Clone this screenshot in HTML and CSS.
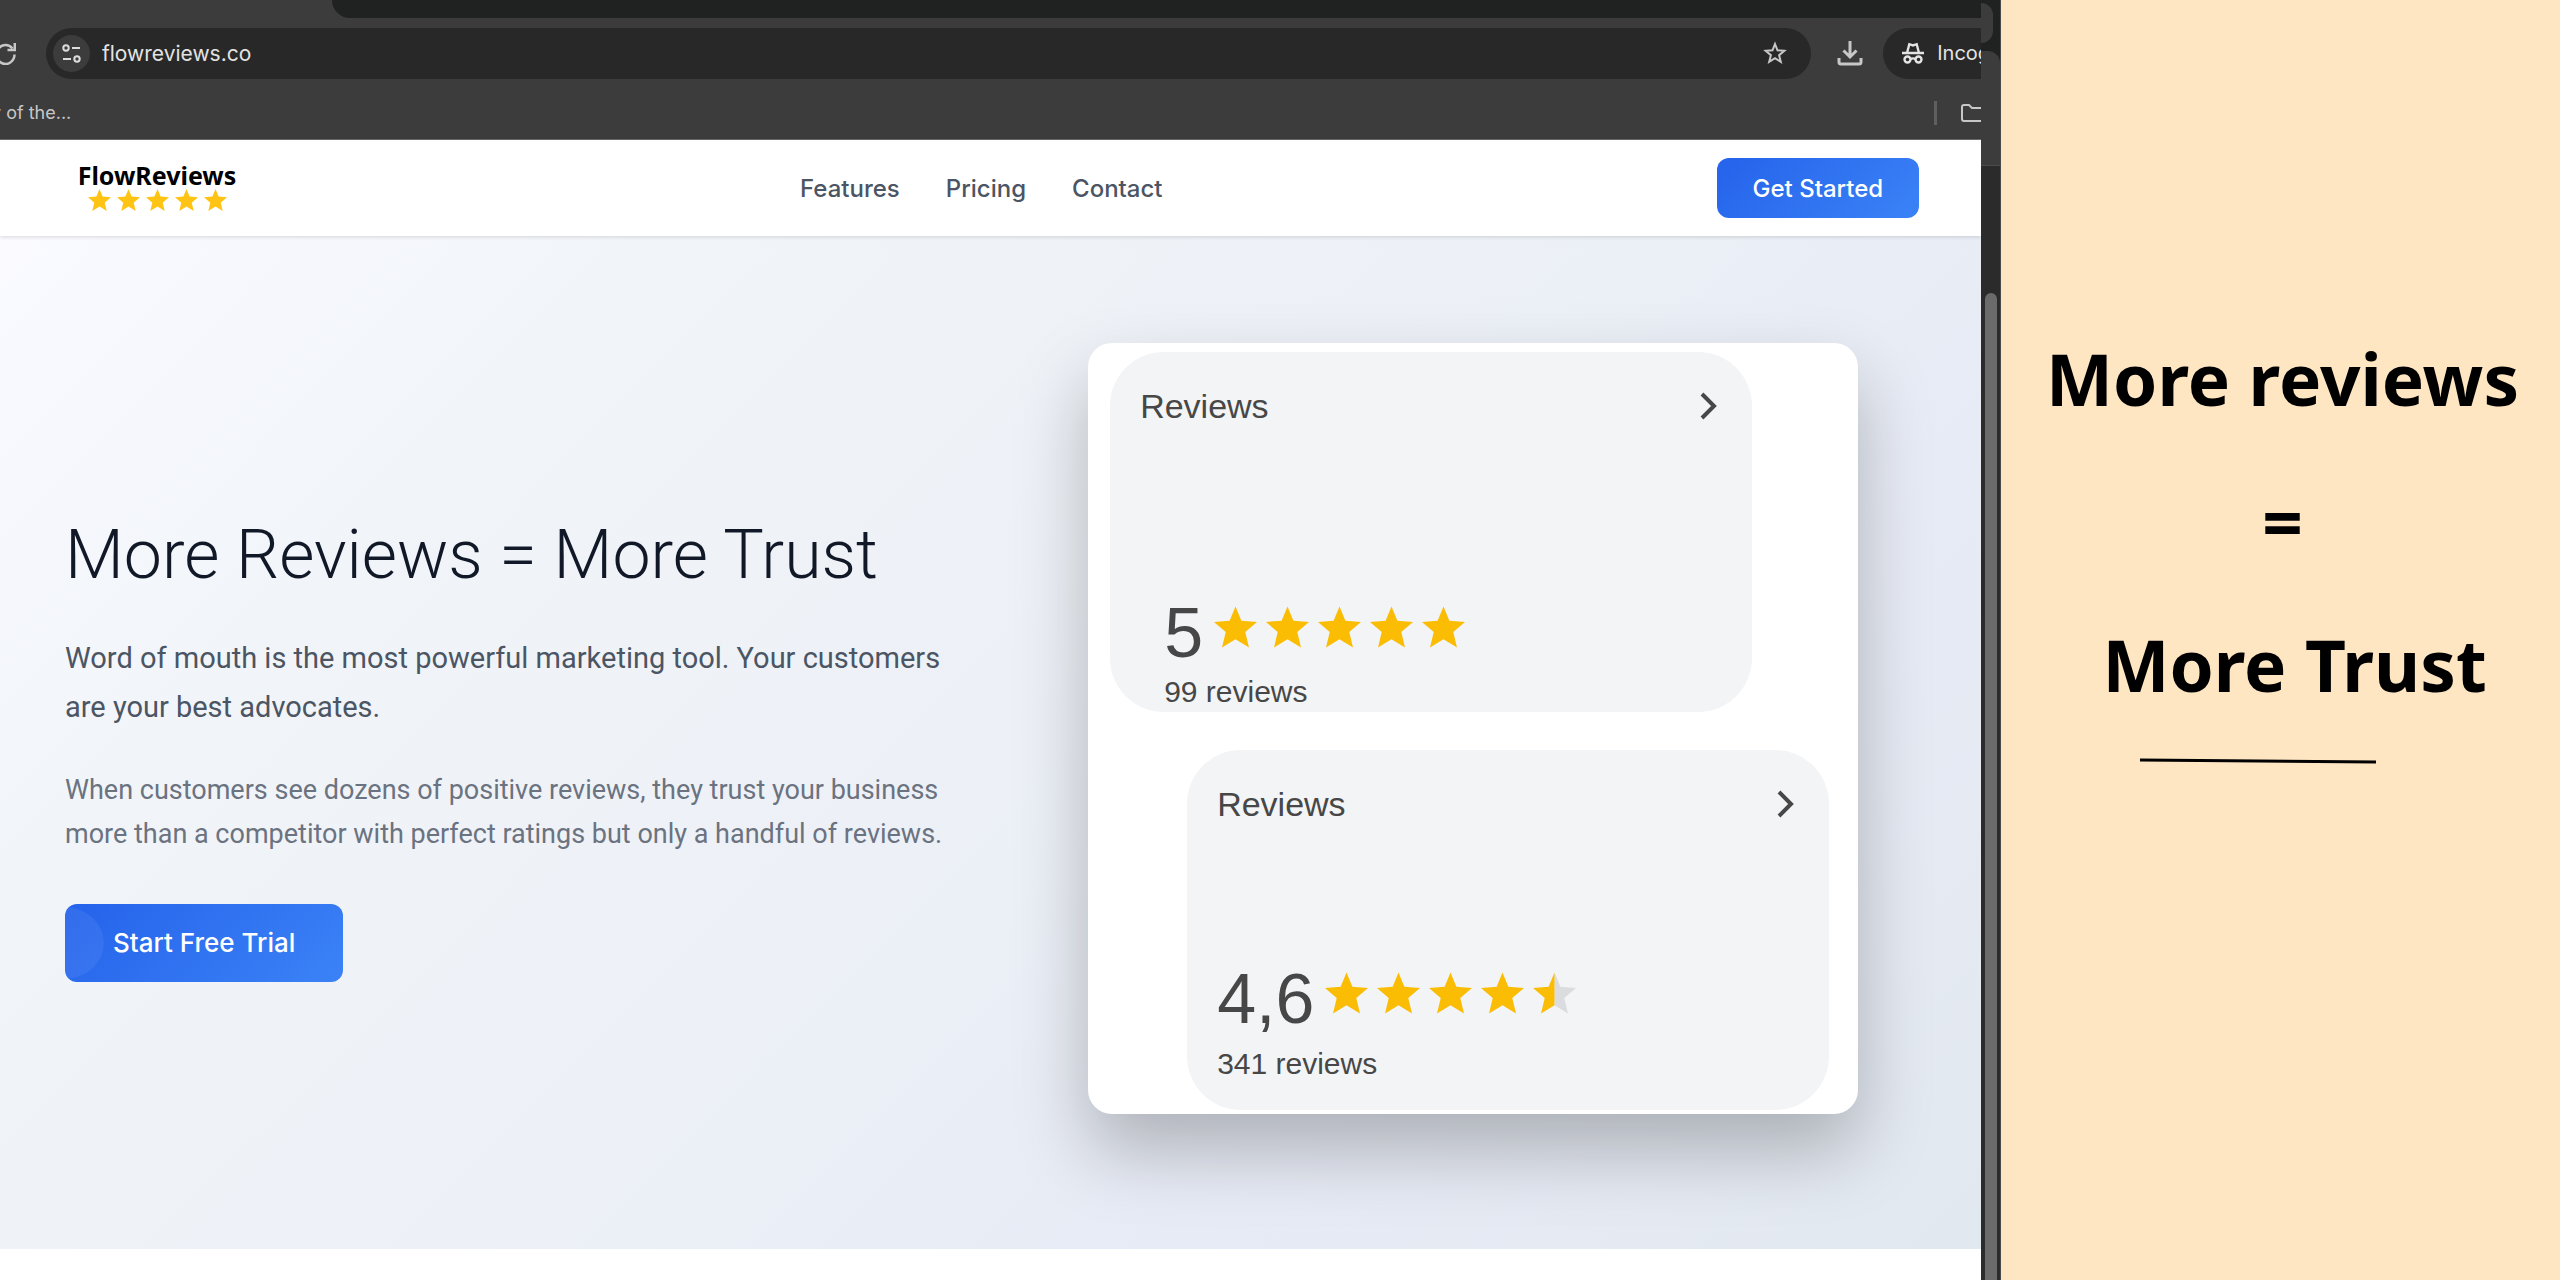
FILE: index.html
```html
<!DOCTYPE html>
<html lang="en">

<head>
	<meta charset="utf-8">
	<title>FlowReviews</title>
	<link rel="stylesheet" href="styles.css">
</head>

<body>
	<!-- shared star shape -->
	<svg class="defs" aria-hidden="true">
		<symbol id="star" viewBox="0 0 44 42">
			<path d="M22 0 L28 14.5 L44 15.8 L32 26.2 L35.8 42 L22 33.5 L8.2 42 L12 26.2 L0 15.8 L16 14.5 Z" />
		</symbol>
	</svg>

	<div class="split-container">

		<div class="browser">
			<div class="tab-strip">
				<div class="tab-rest"></div>
			</div>

			<div class="toolbar">
				<button class="icon-btn reload" aria-label="Reload">
					<svg width="16" height="24" viewBox="8 0 16 24" fill="none" stroke="#c7c7c7" stroke-width="2.5">
						<path d="M20.5 7.5 A9 9.5 0 1 0 22.5 13.5" />
						<path d="M22.8 2 V9 H15.5" />
					</svg>
				</button>
				<div class="omnibox">
					<button class="site-info" aria-label="Site information">
						<svg width="19" height="19" viewBox="0 0 19 19" fill="none" stroke="#dcdcdc" stroke-width="2">
							<circle cx="4" cy="4" r="2.7" />
							<path d="M10 4 H18 M1 15 H9" />
							<circle cx="15" cy="15" r="2.7" />
						</svg>
					</button>
					<input type="text" id="address" aria-label="Address" value="flowreviews.co">
					<button class="icon-btn" aria-label="Bookmark this tab">
						<svg width="24" height="24" viewBox="0 0 24 24" fill="none" stroke="#c7c7c7" stroke-width="2">
							<path d="M12 3 L14.5 9.3 L21.3 9.8 L16.1 14.2 L17.8 20.9 L12 17.2 L6.2 20.9 L7.9 14.2 L2.7 9.8 L9.5 9.3 Z" />
						</svg>
					</button>
				</div>
				<button class="icon-btn download" aria-label="Downloads">
					<svg width="26" height="26" viewBox="0 0 26 26" fill="none" stroke="#c7c7c7" stroke-width="3">
						<path d="M13 1 V16 M6.5 10.5 L13 17 L19.5 10.5" />
						<path d="M2 18 V22 Q2 24 4 24 H22 Q24 24 24 22 V18" />
					</svg>
				</button>
				<div class="incognito">
					<svg width="24" height="22" viewBox="0 0 24 22" fill="none" stroke="#e3e3e3" stroke-width="2.4">
						<path d="M1 11 H23" />
						<path d="M6 11 L8.3 2.2 L12 3.4 L15.7 2.2 L18 11" />
						<circle cx="6.5" cy="17.5" r="3" />
						<circle cx="17.5" cy="17.5" r="3" />
						<path d="M9.5 17 Q12 15.8 14.5 17" />
					</svg>
					<span>Incognito</span>
				</div>
			</div>

			<div class="bookmarks">
				<a href="#">y of the...</a>
				<div class="all-bookmarks">
					<span class="divider"></span>
					<svg width="20" height="20" viewBox="0 0 20 20" fill="none" stroke="#c7c7c7" stroke-width="2">
						<path d="M24 5 H11 L8 2 H3 Q1 2 1 4 V16 Q1 18 3 18 H24" />
					</svg>
				</div>
			</div>

			<header class="site-header">
				<a href="#" class="logo">
					<span>FlowReviews</span>
					<span class="logo-stars">
						<svg><use href="#star" /></svg>
						<svg><use href="#star" /></svg>
						<svg><use href="#star" /></svg>
						<svg><use href="#star" /></svg>
						<svg><use href="#star" /></svg>
					</span>
				</a>
				<nav>
					<a href="#">Features</a>
					<a href="#">Pricing</a>
					<a href="#">Contact</a>
				</nav>
				<button class="btn">Get Started</button>
			</header>

			<main class="hero">
				<div class="hero-text">
					<h1>More Reviews = More Trust</h1>
					<p class="lead">Word of mouth is the most powerful marketing tool. Your customers<br>are your best advocates.</p>
					<p class="sub">When customers see dozens of positive reviews, they trust your business<br>more than a competitor with perfect ratings but only a handful of reviews.</p>
					<button class="btn btn-large">Start Free Trial</button>
				</div>

				<div class="review-card">
					<section class="review first">
						<div class="review-head">
							<h2>Reviews</h2>
							<svg width="18" height="28" viewBox="0 0 18 28" fill="none" stroke="#474747" stroke-width="4">
								<path d="M2 2 L14 14 L2 26" />
							</svg>
						</div>
						<div class="rating">
							<b>5</b>
							<div class="stars">
								<svg><use href="#star" /></svg>
								<svg><use href="#star" /></svg>
								<svg><use href="#star" /></svg>
								<svg><use href="#star" /></svg>
								<svg><use href="#star" /></svg>
							</div>
						</div>
						<p>99 reviews</p>
					</section>

					<section class="review second">
						<div class="review-head">
							<h2>Reviews</h2>
							<svg width="18" height="28" viewBox="0 0 18 28" fill="none" stroke="#474747" stroke-width="4">
								<path d="M2 2 L14 14 L2 26" />
							</svg>
						</div>
						<div class="rating">
							<b>4,6</b>
							<div class="stars">
								<svg><use href="#star" /></svg>
								<svg><use href="#star" /></svg>
								<svg><use href="#star" /></svg>
								<svg><use href="#star" /></svg>
								<svg viewBox="0 0 44 42">
									<path fill="#dadce0" d="M22 0 L28 14.5 L44 15.8 L32 26.2 L35.8 42 L22 33.5 Z" />
									<path d="M22 0 V33.5 L8.2 42 L12 26.2 L0 15.8 L16 14.5 Z" />
								</svg>
							</div>
						</div>
						<p>341 reviews</p>
					</section>
				</div>
			</main>
		</div>

		<!-- edge of the second window -->
		<div class="window-edge">
			<div class="edge-tab"></div>
			<div class="edge-bar"></div>
			<div class="edge-scroll">
				<div class="thumb"></div>
			</div>
		</div>

		<aside class="caption">
			<p>More reviews</p>
			<p>=</p>
			<p class="trust">More Trust</p>
			<svg class="underline" width="236" height="6" viewBox="0 0 236 6">
				<path d="M0 2 L236 4" stroke="#000" stroke-width="3" />
			</svg>
		</aside>

	</div>
</body>

</html>
```
FILE: styles.css
```css
* {
	box-sizing: border-box;
}

body {
	margin: 0;
	background-color: #ffffff;
	font-family: Inter, "Liberation Sans", sans-serif;
}

h1,
h2,
p {
	margin: 0;
}

a {
	color: inherit;
	text-decoration: none;
}

button {
	padding: 0;
	border: none;
	background: none;
	font-family: inherit;
	cursor: pointer;
}

svg {
	display: block;
	flex-shrink: 0;
}

.defs {
	display: none;
}

.split-container {
	display: grid;
	grid-template-columns: 78fr 20px 22fr;
	height: 100vh;
	overflow: hidden;
}

/* browser chrome */

.browser {
	min-width: 0;
	overflow: hidden;
	background-color: #ffffff;
}

.tab-strip {
	height: 18px;
	padding-left: 332px;
	background-color: #3c3c3c;
}

.tab-rest {
	height: 100%;
	background-color: #202121;
	border-bottom-left-radius: 18px;
}

.toolbar {
	display: flex;
	align-items: center;
	height: 70px;
	background-color: #3c3c3c;
}

.omnibox {
	flex: 1;
	display: flex;
	align-items: center;
	height: 51px;
	margin-left: 30px;
	padding: 0 24px 0 7px;
	border-radius: 26px;
	background-color: #282828;
}

.site-info {
	display: flex;
	align-items: center;
	justify-content: center;
	width: 37px;
	height: 37px;
	border-radius: 50%;
	background-color: #3c3c3c;
}

#address {
	flex: 1;
	padding: 0 12px;
	border: none;
	outline: none;
	background: none;
	color: #e3e3e3;
	font-family: inherit;
	font-size: 21px;
}

.download {
	margin: 0 20px 0 26px;
}

.incognito {
	display: flex;
	align-items: center;
	gap: 12px;
	width: 98px;
	height: 51px;
	padding-left: 18px;
	overflow: hidden;
	border-radius: 26px 0 0 26px;
	background-color: #282828;
	color: #e3e3e3;
	font-size: 20px;
}

.bookmarks {
	display: flex;
	align-items: center;
	justify-content: space-between;
	height: 52px;
	padding-bottom: 2px;
	border-bottom: 1px solid #6b6b6b;
	background-color: #3c3c3c;
	color: #c7c7c7;
	font-size: 18px;
}

.bookmarks a {
	margin-left: -9px;
}

.all-bookmarks {
	display: flex;
	align-items: center;
	gap: 24px;
}

.divider {
	width: 3px;
	height: 24px;
	background-color: #5f5f5f;
}

/* site */

.site-header {
	position: relative;
	display: flex;
	align-items: center;
	justify-content: space-between;
	height: 96px;
	padding: 0 62px 0 68px;
	background-color: #ffffff;
	box-shadow: 0 1px 4px rgba(0, 0, 0, 0.14);
}

.logo {
	display: flex;
	flex-direction: column;
	align-items: center;
	width: 178px;
	padding-bottom: 4px;
	color: #000000;
	font-family: "Noto Sans", sans-serif;
	font-size: 25px;
	font-weight: 700;
	line-height: 28px;
}

.logo-stars {
	display: flex;
	gap: 6px;
	fill: #ffc413;
}

.logo-stars svg {
	width: 23px;
	height: 22px;
}

nav {
	display: flex;
	gap: 46px;
	color: #4b5563;
	font-size: 24px;
	font-weight: 500;
}

.btn {
	height: 60px;
	padding: 0 36px;
	border-radius: 12px;
	background: linear-gradient(135deg, #2563eb, #3b82f6);
	color: #ffffff;
	font-size: 24px;
	font-weight: 500;
}

.btn-large {
	height: 78px;
	padding: 0 48px;
	background: radial-gradient(ellipse 39px 36px at 0 50%, rgba(255, 255, 255, 0.06) 98%, transparent), linear-gradient(135deg, #2563eb, #3b82f6);
	font-size: 26px;
}

.hero {
	display: grid;
	grid-template-columns: minmax(0, 1fr) minmax(0, 1fr);
	gap: 70px;
	align-items: center;
	padding: 107px 62px 135px 65px;
	background: linear-gradient(135deg, #fafaff 0%, #f1f5f9 22%, #edf1f7 48%, #e7ebf5 72%, #e2e8f0 100%);
}

.hero-text {
	padding-top: 36px;
}

.hero-text h1 {
	margin-bottom: 36px;
	color: #111827;
	font-family: Roboto, sans-serif;
	font-size: 68px;
	font-weight: 300;
	line-height: 86px;
	white-space: nowrap;
}

.lead {
	margin-bottom: 36px;
	color: #4b5563;
	font-family: Roboto, sans-serif;
	font-size: 29px;
	line-height: 49px;
	white-space: nowrap;
}

.sub {
	margin-bottom: 48px;
	color: #6b7280;
	font-family: Roboto, sans-serif;
	font-size: 27px;
	line-height: 44px;
	white-space: nowrap;
}

.review-card {
	justify-self: center;
	width: 100%;
	max-width: 770px;
	padding: 9px 29px 4px 22px;
	border-radius: 24px;
	background-color: #ffffff;
	box-shadow: 0 36px 72px rgba(0, 0, 0, 0.25);
}

.review {
	display: flex;
	flex-direction: column;
	width: 642px;
	max-width: 100%;
	height: 360px;
	padding: 36px 34px 36px 30px;
	border-radius: 54px;
	background-color: #f3f4f6;
	color: #474747;
	font-family: "Liberation Sans", Arial, sans-serif;
}

.review-head {
	display: flex;
	align-items: center;
	justify-content: space-between;
	margin-bottom: auto;
}

.review h2 {
	font-size: 34px;
	font-weight: 400;
	line-height: 36px;
}

.rating {
	display: flex;
	align-items: center;
	gap: 11px;
}

.rating b {
	font-size: 70px;
	font-weight: 400;
	line-height: 70px;
}

.stars {
	display: flex;
	gap: 9px;
	padding-bottom: 12px;
	fill: #fbbc04;
}

.stars svg {
	width: 43px;
	height: 42px;
}

.review p {
	font-size: 30px;
	line-height: 36px;
}

.first {
	margin-bottom: 38px;
	padding-bottom: 2px;
}

.first .rating,
.first p {
	margin-left: 24px;
}

.first .rating {
	margin-bottom: 6px;
}

.second {
	margin-left: auto;
	padding-bottom: 28px;
}

.second .rating {
	margin-bottom: 12px;
}

/* second window */

.window-edge {
	display: flex;
	flex-direction: column;
	padding-top: 3px;
	border-right: 1px solid #4a4a4a;
	background-color: #202121;
}

.edge-tab {
	width: 12px;
	height: 40px;
	margin-bottom: 8px;
	border-radius: 0 12px 12px 0;
	background-color: #3c3c3c;
}

.edge-bar {
	height: 115px;
	border-bottom: 1px solid #4a4a4a;
	border-top-right-radius: 12px;
	background-color: #3c3c3c;
}

.edge-scroll {
	flex: 1;
	display: flex;
	justify-content: center;
	padding-top: 127px;
	background-color: #2b2b2b;
}

.thumb {
	width: 12px;
	border-radius: 6px 6px 0 0;
	background-color: #6b6b6b;
}

/* caption */

.caption {
	display: flex;
	flex-direction: column;
	align-items: center;
	padding: 307px 0 0 4px;
	background-color: #ffe6c3;
	color: #000000;
	font-family: "Noto Sans", sans-serif;
	font-size: 71px;
	font-weight: 700;
	line-height: 143px;
}

.caption .trust {
	padding-left: 24px;
}

.underline {
	margin: 22px 50px 0 0;
}
```
